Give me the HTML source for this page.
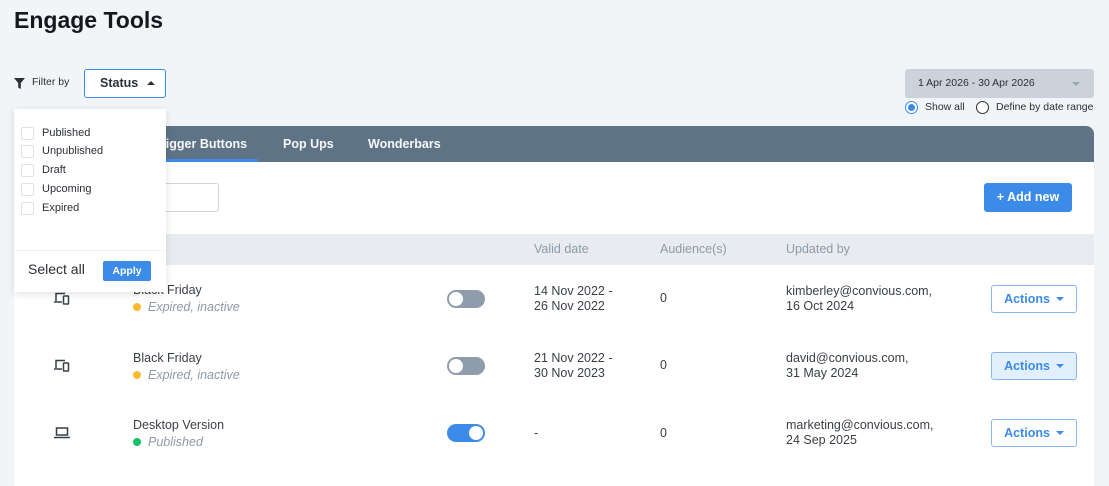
<!DOCTYPE html>
<html><head><style>
*{box-sizing:border-box;margin:0;padding:0}
body{width:1109px;height:467px;overflow:hidden;background:#f2f5f8;font-family:"Liberation Sans",sans-serif;color:#2b2f36;position:relative}
.a{position:absolute;white-space:nowrap}
.card{position:absolute;left:14px;top:126px;width:1080px;height:360px;background:#fff;border-radius:8px 8px 0 0;overflow:hidden}
.tabs{position:absolute;left:0;top:0;width:1080px;height:36px;background:#5e7386}
.tab{position:absolute;top:11px;color:#fff;font-size:12.5px;font-weight:bold;opacity:.95}
.hdr{position:absolute;left:0;top:108px;width:1080px;height:31px;background:#e8ecf0}
.hdr span{position:absolute;top:8px;font-size:12.5px;color:#8e9aa7}
.txt{font-size:12.5px;color:#3a3f47;line-height:15px}
.st{font-size:12.5px;color:#8e9aa7;font-style:italic}
.dot{display:inline-block;width:8px;height:8px;border-radius:50%;margin-right:7px;vertical-align:0}
.tg{position:absolute;width:38px;height:18px;border-radius:9px;background:#8e9cab}
.tg i{position:absolute;top:2px;left:2px;width:14px;height:14px;border-radius:50%;background:#fff}
.tg.on{background:#3d8be8}.tg.on i{left:22px}
.act{position:absolute;width:86px;height:28px;border:1px solid #86b6ef;border-radius:3px;color:#3d8be8;font-size:12.5px;font-weight:bold;text-align:center;line-height:26px;background:#fff}
.act:after{content:"";display:inline-block;margin-left:6px;border:4px solid transparent;border-top-color:#3d8be8;border-bottom:0;vertical-align:2px}
.cb{position:absolute;left:21px;width:13px;height:13px;border:1px solid #dde2e7;border-radius:2px;background:#fff}
.ci{position:absolute;left:42px;font-size:11px;color:#2b2f36}
</style></head><body>
<div class="a" style="left:14px;top:7px;font-size:23px;font-weight:bold;color:#15181d">Engage Tools</div>
<svg class="a" style="left:14px;top:78px" width="11" height="11" viewBox="0 0 11 11"><path d="M0 0H11L6.8 5V11L4.2 9.5V5Z" fill="#2b2f36"/></svg>
<div class="a" style="left:32px;top:76px;font-size:10.5px;color:#2b2f36">Filter by</div>
<div class="a" style="left:84px;top:69px;width:82px;height:29px;border:1px solid #3d8be8;border-radius:3px;background:#fff;font-size:12.5px;font-weight:bold;line-height:27px;padding-left:15px">Status <span style="display:inline-block;margin-left:5px;border:4px solid transparent;border-bottom-color:#2b2f36;border-top:0;vertical-align:2px"></span></div>
<div class="a" style="left:905px;top:69px;width:189px;height:29px;background:#cbd2da;border-radius:3px;font-size:10.5px;line-height:28px;padding-left:13px;color:#2b2f36">1 Apr 2026 - 30 Apr 2026<span style="position:absolute;right:14px;top:13px;border:4px solid transparent;border-top-color:#9aa5b1;border-bottom:0"></span></div>
<div class="a" style="left:905px;top:101px;width:13px;height:13px;border-radius:50%;border:1px solid #3d8be8;background:#fff"><div style="margin:2px;width:7px;height:7px;border-radius:50%;background:#3d8be8"></div></div>
<div class="a" style="left:925px;top:101px;font-size:10.5px">Show all</div>
<div class="a" style="left:976px;top:101px;width:13px;height:13px;border-radius:50%;border:1px solid #2b2f36;background:#fff"></div>
<div class="a" style="left:996px;top:101px;font-size:10.5px">Define by date range</div>
<div class="card">
 <div class="tabs">
  <div class="tab" style="left:140px">Trigger Buttons</div>
  <div style="position:absolute;left:134px;top:33px;width:110px;height:3px;background:#3d8be8"></div>
  <div class="tab" style="left:269px">Pop Ups</div>
  <div class="tab" style="left:354px">Wonderbars</div>
 </div>
 <div style="position:absolute;left:100px;top:57px;width:105px;height:29px;border:1px solid #cbd2da;border-radius:3px"></div>
 <div style="position:absolute;left:970px;top:57px;width:88px;height:29px;background:#3d8be8;border-radius:3px;color:#fff;font-size:12.5px;font-weight:bold;text-align:center;line-height:29px">+ Add new</div>
 <div class="hdr"><span style="left:520px">Valid date</span><span style="left:646px">Audience(s)</span><span style="left:772px">Updated by</span></div>
</div>
<svg class="a" style="left:54px;top:292px" width="16" height="13" viewBox="0 0 16 13" fill="none" stroke="#3a3f47" stroke-width="1.5"><path d="M2 9V1.5H11"/><path d="M0 10H8"/><rect x="9.5" y="4" width="5" height="8" rx=".5"/></svg>
<svg class="a" style="left:54px;top:359px" width="16" height="13" viewBox="0 0 16 13" fill="none" stroke="#3a3f47" stroke-width="1.5"><path d="M2 9V1.5H11"/><path d="M0 10H8"/><rect x="9.5" y="4" width="5" height="8" rx=".5"/></svg>
<svg class="a" style="left:54px;top:427px" width="16" height="12" viewBox="0 0 16 12" fill="none" stroke="#3a3f47" stroke-width="1.5"><rect x="2.5" y="1" width="11" height="7"/><path d="M0 10.5H16"/></svg>
<div class="a txt" style="left:133px;top:283px">Black Friday</div>
<div class="a st" style="left:133px;top:300px"><span class="dot" style="background:#fbb92e"></span>Expired, inactive</div>
<div class="a txt" style="left:133px;top:351px">Black Friday</div>
<div class="a st" style="left:133px;top:368px"><span class="dot" style="background:#fbb92e"></span>Expired, inactive</div>
<div class="a txt" style="left:133px;top:418px">Desktop Version</div>
<div class="a st" style="left:133px;top:435px"><span class="dot" style="background:#15c26b"></span>Published</div>
<div class="tg" style="left:447px;top:290px"><i></i></div>
<div class="tg" style="left:447px;top:357px"><i></i></div>
<div class="tg on" style="left:447px;top:424px"><i></i></div>
<div class="a txt" style="left:534px;top:284px">14 Nov 2022 -<br>26 Nov 2022</div>
<div class="a txt" style="left:534px;top:351px">21 Nov 2022 -<br>30 Nov 2023</div>
<div class="a txt" style="left:534px;top:426px">-</div>
<div class="a txt" style="left:660px;top:291px">0</div>
<div class="a txt" style="left:660px;top:358px">0</div>
<div class="a txt" style="left:660px;top:426px">0</div>
<div class="a txt" style="left:786px;top:284px">kimberley@convious.com,<br>16 Oct 2024</div>
<div class="a txt" style="left:786px;top:351px">david@convious.com,<br>31 May 2024</div>
<div class="a txt" style="left:786px;top:418px">marketing@convious.com,<br>24 Sep 2025</div>
<div class="act" style="left:991px;top:285px">Actions</div>
<div class="act" style="left:991px;top:352px;background:#e2effc">Actions</div>
<div class="act" style="left:991px;top:419px">Actions</div>
<div class="a" style="left:14px;top:109px;width:152px;height:183px;background:#fff;box-shadow:0 2px 8px rgba(0,0,0,.12)">
 <div style="position:absolute;left:0;top:141px;width:152px;height:1px;background:#eef0f2"></div>
 <div style="position:absolute;left:14px;top:152px;font-size:14px;color:#2b2f36">Select all</div>
 <div style="position:absolute;left:89px;top:152px;width:48px;height:20px;background:#3d8be8;border-radius:2px;color:#fff;font-size:10.5px;font-weight:bold;text-align:center;line-height:20px">Apply</div>
</div>
<div class="cb" style="top:127px"></div><div class="a ci" style="top:127px">Published</div>
<div class="cb" style="top:145px"></div><div class="a ci" style="top:145px">Unpublished</div>
<div class="cb" style="top:164px"></div><div class="a ci" style="top:164px">Draft</div>
<div class="cb" style="top:183px"></div><div class="a ci" style="top:183px">Upcoming</div>
<div class="cb" style="top:202px"></div><div class="a ci" style="top:202px">Expired</div>
</body></html>
